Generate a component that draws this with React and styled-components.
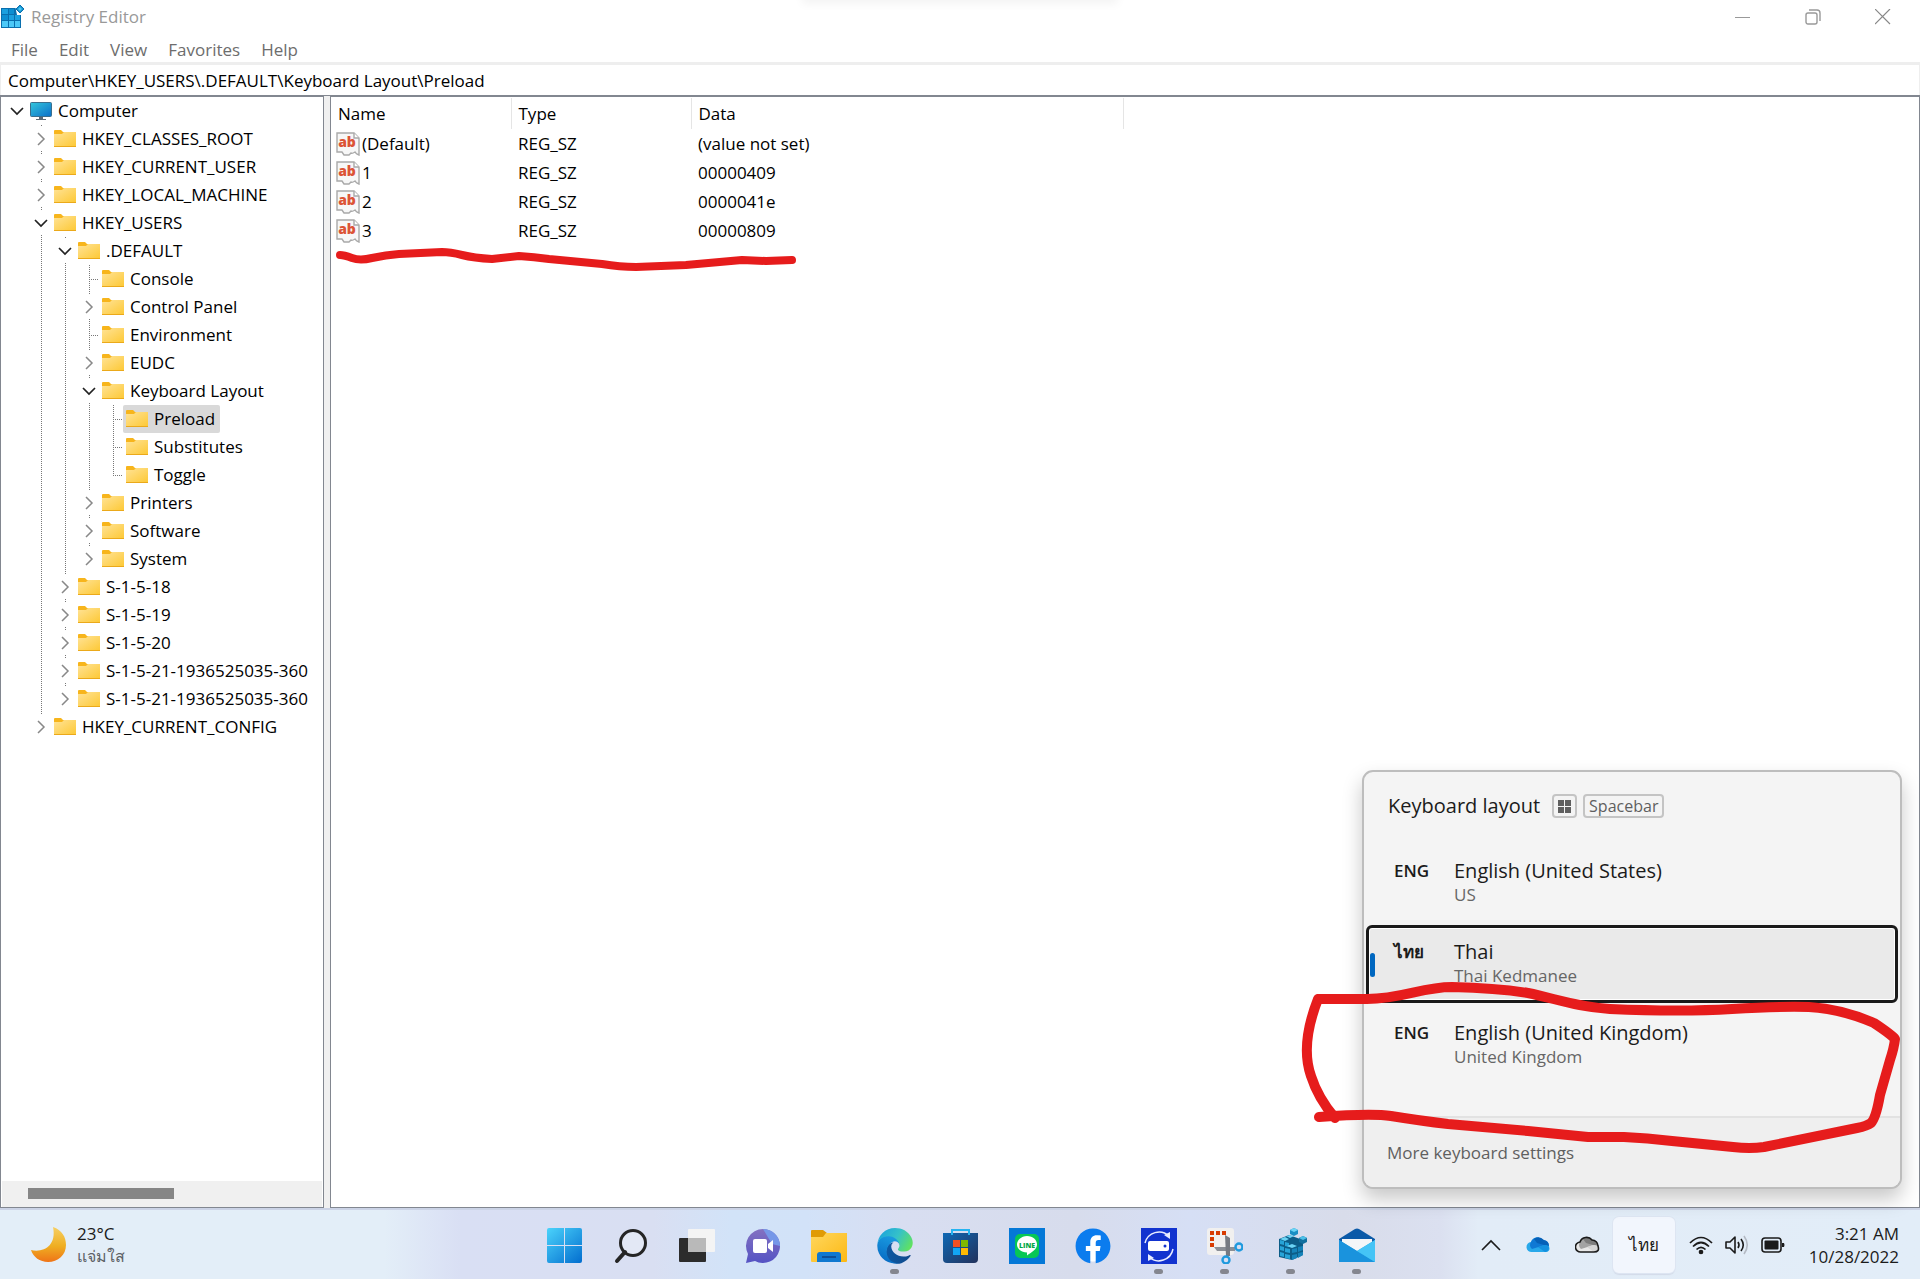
import React from 'react';
import styled, { createGlobalStyle, css } from 'styled-components';
import { FaFacebook } from 'react-icons/fa';

const GlobalStyle = createGlobalStyle`
  * {
    box-sizing: border-box;
  }
  body {
    margin: 0;
    font-family: 'Open Sans', 'Noto Sans', sans-serif;
    font-size: 17px;
    line-height: 24px;
    color: #000;
    background: #fff;
  }
  button,
  input {
    font: inherit;
    color: inherit;
    border: 0;
    padding: 0;
    background: none;
  }
  svg {
    display: block;
    flex: none;
  }
`;

const frame = '#828790';
const ink = '#e61c1c';

const Desktop = styled.div`
  position: relative;
  display: flex;
  flex-direction: column;
  height: 100vh;
  overflow: hidden;
`;

const TitleBar = styled.header`
  position: relative;
  display: flex;
  align-items: center;
  height: 34px;
  padding: 0 2px 0 1px;
  color: #999;
  &::before {
    content: '';
    position: absolute;
    top: -10px;
    left: 42%;
    right: 42%;
    height: 10px;
    box-shadow: 0 0 10px 4px #f4f4f4;
  }
`;
const Title = styled.h1`
  flex: 1;
  margin: 0 0 0 6px;
  font-size: 17px;
  font-weight: 400;
`;
const WindowButton = styled.button`
  display: flex;
  align-items: center;
  justify-content: center;
  width: 70px;
  height: 34px;
`;

const MenuBar = styled.nav`
  display: flex;
  gap: 21px;
  height: 28px;
  padding: 2px 11px 0;
  color: #6d6d6d;
`;
const MenuItem = styled.button`
  height: 28px;
`;

const AddressBar = styled.input`
  width: 100%;
  height: 33px;
  padding: 0 7px;
  border: solid #eee;
  border-width: 3px 1px 0;
  outline: 0;
`;

const Panes = styled.main`
  display: flex;
  flex: 1;
  min-height: 0;
  gap: 6px;
  background: #f0f0f0;
  border-top: 1px solid ${frame};
`;
const TreePane = styled.section`
  display: flex;
  flex-direction: column;
  width: 324px;
  overflow: hidden;
  background: #fff;
  border: 1px solid ${frame};
`;
const Tree = styled.ul`
  flex: 1;
  margin: 0;
  padding: 0 2px;
  list-style: none;
  overflow: hidden;
`;
const TreeRow = styled.li`
  display: flex;
  height: 28px;
  white-space: nowrap;
`;

const dotsDown = 'repeating-linear-gradient(to bottom, #777 0 1px, transparent 1px 2px)';
const dotsAcross = 'repeating-linear-gradient(to right, #777 0 1px, transparent 1px 2px)';
const guides = {
  none: css``,
  line: css`
    background: ${dotsDown} 14px 0 / 1px 28px no-repeat;
  `,
  branch: css`
    background: ${dotsDown} 14px 0 / 1px 28px no-repeat, ${dotsAcross} 14px 14px / 10px 1px no-repeat;
  `,
  end: css`
    background: ${dotsDown} 14px 0 / 1px 15px no-repeat, ${dotsAcross} 14px 14px / 10px 1px no-repeat;
  `,
  toggle: css`
    background: ${dotsDown} 14px 0 / 1px 1px no-repeat, ${dotsDown} 14px 26px / 1px 2px no-repeat;
  `,
  lastToggle: css`
    background: ${dotsDown} 14px 0 / 1px 1px no-repeat;
  `,
};
const Guide = styled.span`
  display: flex;
  flex: none;
  align-items: center;
  justify-content: center;
  width: 24px;
  padding-left: 4px;
  ${({ $kind }) => guides[$kind]}
`;
const TreeItem = styled.button`
  display: flex;
  align-items: center;
  gap: 6px;
  height: 28px;
  padding: 0 5px 0 3px;
  border-radius: 2px;
  background: ${({ $selected }) => ($selected ? '#d9d9d9' : 'none')};
`;

const ScrollTrack = styled.div`
  height: 26px;
  margin: 0 1px;
  padding: 7px 26px;
  background: #f0f0f0;
`;
const ScrollThumb = styled.div`
  width: 146px;
  height: 11px;
  background: #868686;
`;

const ValuePane = styled.section`
  position: relative;
  flex: 1;
  background: #fff;
  border: 1px solid ${frame};
`;
const ValueTable = styled.table`
  margin-top: 1px;
  width: 792px;
  table-layout: fixed;
  border-collapse: collapse;
`;
const HeadCell = styled.th`
  width: ${({ $width }) => $width}px;
  height: 31px;
  padding: 0 7px;
  text-align: left;
  font-weight: 400;
  border-right: 1px solid #e5e5e5;
`;
const Cell = styled.td`
  height: 29px;
  padding: 0 7px;
`;
const NameCell = styled(Cell)`
  padding: 0 5px;
`;
const ValueName = styled.div`
  display: flex;
  align-items: center;
  gap: 2px;
`;

const Ink = styled.svg`
  position: absolute;
  left: -2px;
  top: -2px;
  overflow: visible;
  pointer-events: none;
  fill: none;
  stroke: ${ink};
  stroke-linecap: round;
  stroke-linejoin: round;
`;

const Flyout = styled.aside`
  position: absolute;
  right: 18px;
  bottom: 90px;
  width: 540px;
  color: #1b1b1b;
  background: #f4f4f4;
  border: 2px solid #bdbdbd;
  border-radius: 11px;
  box-shadow: 0 10px 20px rgba(0, 0, 0, 0.22);
`;
const FlyoutHead = styled.div`
  display: flex;
  align-items: center;
  gap: 6px;
  height: 68px;
  padding: 0 24px;
`;
const FlyoutTitle = styled.h2`
  margin: 0 6px 0 0;
  font-size: 20px;
  font-weight: 400;
`;
const KeyCap = styled.kbd`
  display: flex;
  align-items: center;
  height: 24px;
  padding: 0 4px;
  font: 16px 'Open Sans', sans-serif;
  color: #5f5f5f;
  border: 2px solid #c4c4c4;
  border-radius: 4px;
`;
const Layouts = styled.div`
  display: flex;
  flex-direction: column;
  gap: 3px;
  padding: 4px 2px 0;
`;
const LayoutOption = styled.button`
  position: relative;
  display: grid;
  grid-template-columns: 60px 1fr;
  align-content: start;
  height: 78px;
  padding: 12px 25px 0;
  text-align: left;
  border: 3px solid transparent;
  border-radius: 6px;
  ${({ $active }) =>
    $active &&
    css`
      background: #eaeaea;
      border-color: #1a1a1a;
      box-shadow: inset 0 0 0 1px #fff;
      &::before {
        content: '';
        position: absolute;
        left: 1px;
        top: 25px;
        width: 5px;
        height: 24px;
        border-radius: 3px;
        background: #0067c0;
      }
    `}
`;
const LayoutCode = styled.span`
  font-size: 17px;
  font-weight: 600;
`;
const LayoutName = styled.span`
  font-size: 20px;
`;
const LayoutDetail = styled.span`
  grid-column: 2;
  font-size: 17px;
  color: #666;
`;
const FlyoutFoot = styled.div`
  display: flex;
  align-items: center;
  height: 71px;
  margin-top: 32px;
  padding: 0 23px;
  color: #5f5f5f;
  background: #efefef;
  border-top: 2px solid #e2e2e2;
  border-radius: 0 0 9px 9px;
`;

const Taskbar = styled.footer`
  display: grid;
  grid-template-columns: 1fr auto 1fr;
  flex: none;
  height: 71px;
  color: #1b1b1b;
  border-top: 2px solid #cbd3e6;
  background: linear-gradient(
    to right,
    #e3eef8 0,
    #e3eef8 20%,
    #d9dff4 24%,
    #d9dff2 34%,
    #d2e3f8 38%,
    #d2e2f8 42%,
    #d8def1 47%,
    #d7dcec 56%,
    #d6dff5 62%,
    #d8dcea 70%,
    #dbe0f0 75%,
    #e2ecf7 77%,
    #e2edf8 100%
  );
`;
const Weather = styled.button`
  display: flex;
  align-items: center;
  gap: 10px;
  padding: 0 30px;
  text-align: left;
`;
const Lines = styled.span`
  display: flex;
  flex-direction: column;
  line-height: 23px;
`;
const Muted = styled.span`
  font-size: 16px;
  color: #5d6166;
`;
const Apps = styled.div`
  display: flex;
  padding: 2px 0 0 2px;
`;
const AppButton = styled.button`
  position: relative;
  display: flex;
  align-items: center;
  justify-content: center;
  width: 66px;
  ${({ $running }) =>
    $running &&
    css`
      &::after {
        content: '';
        position: absolute;
        left: 28px;
        bottom: 5px;
        width: 9px;
        height: 5px;
        border-radius: 3px;
        background: #84868f;
      }
    `}
`;
const Tray = styled.div`
  display: flex;
  align-items: center;
  justify-content: flex-end;
  padding-right: 21px;
`;
const TrayButton = styled.button`
  display: flex;
  align-items: center;
  justify-content: center;
  gap: 12px;
  width: ${({ $width }) => $width}px;
  height: 56px;
`;
const LanguageButton = styled(TrayButton)`
  background: #f2f6fd;
  border-radius: 6px;
  box-shadow: 0 0 0 1px #dde5f2, 0 2px 1px #d3dae8;
`;
const Clock = styled.time`
  display: flex;
  flex-direction: column;
  margin-left: 10px;
  line-height: 23px;
  text-align: right;
`;
const FacebookLogo = styled(FaFacebook)`
  color: #0b7cee;
  background: radial-gradient(#fff 60%, transparent 62%);
`;

const RegistryIcon = () => (
  <svg width="24" height="24" viewBox="0 0 24 24">
    <rect x="0" y="3" width="20" height="20" fill="#0a6fae" />
    <path d="M1 4h6v5H1zM8 10h5v5H8zM14 10h5v5h-5z" fill="#1ba0df" />
    <path d="M1 10h6v5H1zM8 4h5v5H8z" fill="#0d8ed1" />
    <path d="M1 16h6v6H1zM8 16h5v6H8zM14 16h5v6h-5z" fill="#4cc9f8" />
    <path d="M14 0h8v10h-6z" fill="#fff" />
    <path d="M19 0l4 4-4 4-4-4z" fill="#1594cf" stroke="#0a6fae" />
    <path d="M19 2l2 2-2 2-2-2z" fill="#4cc9f8" />
  </svg>
);

const ComputerIcon = () => (
  <svg width="22" height="20" viewBox="0 0 22 20">
    <defs>
      <linearGradient id="screen" x1="0" y1="0" x2="1" y2="1">
        <stop offset="0" stopColor="#33c6dc" />
        <stop offset="1" stopColor="#0b6fc9" />
      </linearGradient>
    </defs>
    <rect x="0.5" y="1.5" width="21" height="14" rx="1" fill="url(#screen)" stroke="#3b6e8c" />
    <path d="M9 16h4v2h3v1H6v-1h3z" fill="#5b6b78" />
  </svg>
);

const FolderIcon = () => (
  <svg width="22" height="18" viewBox="0 0 22 18">
    <defs>
      <linearGradient id="folder" x1="0" y1="0" x2="1" y2="1">
        <stop offset="0" stopColor="#ffe397" />
        <stop offset="1" stopColor="#fdc937" />
      </linearGradient>
    </defs>
    <path d="M0 1q0-1 1-1h6l2 2h12q1 0 1 1v3H0z" fill="#f7b51c" />
    <path d="M0 4h8l2-2h12v14H0z" fill="url(#folder)" />
    <path d="M0 16h22v1H0z" fill="#eba91a" />
  </svg>
);

const StringIcon = () => (
  <svg width="24" height="24" viewBox="0 0 24 24">
    <path
      d="M1 1h17l5 5v17q-3-1-4-3-3 2-4 1l-2 2H8l-2-3H1z"
      fill="#f7f7f7"
      stroke="#a9a9a9"
      strokeWidth="1.4"
    />
    <path d="M18 1v5h5" fill="#fff" stroke="#a9a9a9" strokeWidth="1.4" />
    <text x="11" y="15" textAnchor="middle" fontFamily="Open Sans" fontSize="14" fontWeight="800" fill="#dc5436">
      ab
    </text>
  </svg>
);

const Chevron = ({ open }) =>
  open ? (
    <svg width="14" height="14" viewBox="0 0 14 14" fill="none" stroke="#222" strokeWidth="1.7">
      <path d="M1 4l6 6 6-6" />
    </svg>
  ) : (
    <svg width="14" height="14" viewBox="0 0 14 14" fill="none" stroke="#888" strokeWidth="1.5">
      <path d="M4 1l6 6-6 6" />
    </svg>
  );

const MoonIcon = () => (
  <svg width="37" height="37" viewBox="0 0 37 37">
    <defs>
      <linearGradient id="moon" x1="0" y1="0" x2="0" y2="1">
        <stop offset="0" stopColor="#f6cf63" />
        <stop offset="0.55" stopColor="#efae22" />
        <stop offset="1" stopColor="#ef7417" />
      </linearGradient>
    </defs>
    <path d="M23 1C32 4 36 11 36 19 36 29 28 36 18 36 10 36 3 31 1 24c12 3 26-4 22-23z" fill="url(#moon)" />
  </svg>
);

const StartIcon = () => (
  <svg width="36" height="36" viewBox="0 0 36 36">
    <defs>
      <linearGradient id="start" gradientUnits="userSpaceOnUse" x1="0" y1="0" x2="32" y2="36">
        <stop offset="0" stopColor="#4bd3fb" />
        <stop offset="1" stopColor="#0470d0" />
      </linearGradient>
    </defs>
    <path d="M2 0h15v17H0V2q0-2 2-2zM18 0h15q2 0 2 2v15H18zM0 18h17v17H2q-2 0-2-2zM18 18h17v15q0 2-2 2H18z" fill="url(#start)" />
  </svg>
);

const SearchIcon = () => (
  <svg width="34" height="36" viewBox="0 0 34 36" fill="none" stroke="#252525">
    <circle cx="19" cy="15" r="12.5" strokeWidth="3" fill="#e3e8f5" />
    <path d="M11 24l-8 9" strokeWidth="4" strokeLinecap="round" />
  </svg>
);

const TaskViewIcon = () => (
  <svg width="36" height="36" viewBox="0 0 36 36">
    <rect x="0" y="10" width="27" height="24" rx="1" fill="#2c2c2c" />
    <rect x="9" y="1" width="27" height="23" rx="1" fill="#f4f4f4" />
    <rect x="9" y="10" width="18" height="14" fill="#b9b9b9" />
  </svg>
);

const ChatIcon = () => (
  <svg width="36" height="36" viewBox="0 0 36 36">
    <defs>
      <linearGradient id="chat" x1="0" y1="0" x2="0" y2="1">
        <stop offset="0" stopColor="#8371c1" />
        <stop offset="1" stopColor="#5553c4" />
      </linearGradient>
    </defs>
    <path d="M18 1a17 17 0 1 1-8 32L1 35l2-9A17 17 0 0 1 18 1z" fill="url(#chat)" />
    <path d="M18 1a17 17 0 0 1 17 17l-8-2z" fill="#7597e8" />
    <rect x="8" y="11" width="14" height="14" rx="2" fill="#fff" />
    <path d="M23 16l5-4v12l-5-4z" fill="#fff" />
  </svg>
);

const ExplorerIcon = () => (
  <svg width="36" height="36" viewBox="0 0 36 36">
    <defs>
      <linearGradient id="explorer" x1="0" y1="0" x2="1" y2="1">
        <stop offset="0" stopColor="#ffd75e" />
        <stop offset="1" stopColor="#fcb813" />
      </linearGradient>
    </defs>
    <path d="M0 3q0-1 1-1h11l4 3h19q1 0 1 1v6H0z" fill="#e09b05" />
    <path d="M0 9h12l3-4h21v28q0 1-1 1H1q-1 0-1-1z" fill="url(#explorer)" />
    <path d="M6 34v-7q0-3 3-3h18q3 0 3 3v7z" fill="#0f78d0" />
    <path d="M11 29h14" stroke="#0c4f98" strokeWidth="2" />
  </svg>
);

const EdgeIcon = () => (
  <svg width="36" height="36" viewBox="0 0 256 260">
    <defs>
      <linearGradient id="edgeDark" x1="0" y1="0" x2="1" y2="0">
        <stop offset="0" stopColor="#0c59a4" />
        <stop offset="1" stopColor="#114a8b" />
      </linearGradient>
      <linearGradient id="edgeBlue" x1="0.6" y1="0" x2="0.3" y2="1">
        <stop offset="0" stopColor="#1b9de2" />
        <stop offset="1" stopColor="#0669c2" />
      </linearGradient>
      <linearGradient id="edgeGreen" x1="0" y1="0.3" x2="1" y2="0.7">
        <stop offset="0" stopColor="#1ca4dc" />
        <stop offset="0.5" stopColor="#35c1c9" />
        <stop offset="1" stopColor="#62e35d" />
      </linearGradient>
    </defs>
    <path
      fill="url(#edgeDark)"
      d="M235.68 195.46a93.73 93.73 0 0 1-10.54 4.71 101.87 101.87 0 0 1-35.9 6.46c-47.32 0-88.54-32.55-88.54-74.32A31.48 31.48 0 0 1 117.13 105c-42.8 1.8-53.8 46.4-53.8 72.53 0 73.88 68.09 81.37 82.76 81.37 7.91 0 19.84-2.3 27-4.56l1.31-.44A128.34 128.34 0 0 0 241 201.1a4 4 0 0 0-5.32-5.64z"
    />
    <path
      fill="url(#edgeBlue)"
      d="M105.73 241.42A79.2 79.2 0 0 1 83 220.08a80.72 80.72 0 0 1 29.49-120.2c3.12-1.47 8.45-4.13 15.54-4a32.35 32.35 0 0 1 25.69 13 31.88 31.88 0 0 1 6.36 18.66c0-.21 24.46-79.6-80-79.6-43.9 0-80 41.66-80 78.21a130.15 130.15 0 0 0 12.11 56 128 128 0 0 0 156.38 67.11 75.55 75.55 0 0 1-62.78-8z"
    />
    <path
      fill="url(#edgeGreen)"
      d="M152.33 148.86c-.81 1.05-3.3 2.5-3.3 5.66 0 2.61 1.7 5.12 4.72 7.23 14.38 10 41.49 8.68 41.56 8.68a59.56 59.56 0 0 0 30.27-8.35A61.38 61.38 0 0 0 256 109.2c.26-22.41-8-37.31-11.34-43.91C223.46 23.84 177.72 0 128 0A128 128 0 0 0 0 126.2c.48-36.54 36.8-66.05 80-66.05 3.5 0 23.46.34 42 10.07 16.34 8.58 24.9 18.94 30.85 29.21 6.18 10.67 7.28 24.15 7.28 29.52s-2.74 13.33-7.8 19.91z"
    />
  </svg>
);

const StoreIcon = () => (
  <svg width="36" height="36" viewBox="0 0 36 36">
    <defs>
      <linearGradient id="store" x1="0" y1="0" x2="1" y2="1">
        <stop offset="0" stopColor="#0e68b4" />
        <stop offset="1" stopColor="#23325c" />
      </linearGradient>
    </defs>
    <path d="M0 5h35v26q0 4-4 4H4q-4 0-4-4z" fill="url(#store)" />
    <path d="M9 7V2h17v5" fill="none" stroke="#25b4f1" strokeWidth="2" />
    <path d="M10 12h7v7h-7z" fill="#f25022" />
    <path d="M18 12h7v7h-7z" fill="#7fba00" />
    <path d="M10 20h7v7h-7z" fill="#12a5f4" />
    <path d="M18 20h7v7h-7z" fill="#ffb904" />
  </svg>
);

const LineIcon = () => (
  <svg width="36" height="36" viewBox="0 0 36 36">
    <rect width="36" height="36" fill="#0478d7" />
    <rect x="6" y="6" width="24" height="24" rx="5" fill="#07c755" />
    <path d="M18 8c6 0 10 4 10 8.500 0 5-6 8-10 11v-3c-6 0-10-4-10-8S12 8 18 8z" fill="#fff" />
    <text x="18" y="20" textAnchor="middle" fontFamily="Open Sans" fontSize="7" fontWeight="800" fill="#06a848">
      LINE
    </text>
  </svg>
);

const RotateAppIcon = () => (
  <svg width="36" height="36" viewBox="0 0 36 36">
    <rect width="36" height="36" fill="#1233cf" />
    <g fill="none" stroke="#e8ecff" strokeWidth="1.500">
      <path d="M4 15A14.500 14.500 0 0 1 28 8M32 21A14.500 14.500 0 0 1 8 29" />
    </g>
    <path d="M29 4v7l-6-4zM7 33v-7l6 4z" fill="#e8ecff" />
    <rect x="7" y="13" width="21" height="10" rx="2" fill="#fff" />
    <circle cx="24" cy="18" r="1.500" fill="#1233cf" />
  </svg>
);

const SnipIcon = () => (
  <svg width="36" height="36" viewBox="0 0 36 36">
    <rect width="27" height="27" rx="3" fill="#f1f0ef" />
    <path d="M3 3h4v4H3zM9 3h4v4H9zM15 3h4v4h-4zM3 9h4v4H3zM3 15h4v4H3z" fill="#d83b01" />
    <path d="M7 19l3 4h18v-4z" fill="#8b8f96" />
    <path d="M18 7l5 3v18h-4z" fill="#767a82" />
    <circle cx="32" cy="19" r="3.500" fill="none" stroke="#1f9ade" strokeWidth="2.400" />
    <circle cx="19" cy="32" r="3.500" fill="none" stroke="#1f9ade" strokeWidth="2.400" />
  </svg>
);

const RegistryCubeIcon = () => (
  <svg width="36" height="36" viewBox="-3 0 36 36">
    <path d="M3 11l10-4 14 5v15l-11 5-13-3z" fill="#0c5d88" />
    <path d="M4 12l4 1v4l-4-1zM4 18l4 1v4l-4-1zM4 24l4 1v4l-4-1zM9 20l5 1v4l-5-1zM9 26l5 1v4l-5-1z" fill="#27a4d8" />
    <path d="M16 21l5-1v4l-5 1zM22 19l5-1v4l-5 2zM16 27l5-1v4l-5 2zM22 25l5-1v3l-5 3z" fill="#1583b9" />
    <path d="M9 14l4 1v4l-4-1z" fill="#27a4d8" />
    <path d="M4 11l5-2 4 2-4 2zM10 8l4-1 4 1-4 2zM11 18l5-2 5 2-5 2z" fill="#6bd4f5" />
    <path d="M18 0l4 2v4l-4 2-4-2V2z" fill="#1a8fc4" />
    <path d="M18 0l4 2-4 2-4-2z" fill="#6bd4f5" />
    <path d="M27 8l4 2v4l-4 2-4-2v-4z" fill="#12709f" />
    <path d="M27 8l4 2-4 2-4-2z" fill="#4cc0e9" />
  </svg>
);

const MailIcon = () => (
  <svg width="36" height="36" viewBox="0 0 36 36">
    <path d="M0 11L16 1q2-1 4 0l16 10v3H0z" fill="#0b5aa8" />
    <path d="M3 11h30v6L18 26 3 17z" fill="#f4f6f8" />
    <path d="M0 12l18 11L36 12v22H0z" fill="#27aeea" />
    <path d="M0 12l18 11 18 11H0z" fill="#1a93dd" />
    <path d="M36 12L18 23l18 11z" fill="#45c4f6" />
  </svg>
);

const cloud = 'M6 17a5 5 0 0 1-1-10 7 7 0 0 1 12-2 6 6 0 0 1 6 6q2 6-4 6z';
const CloudIcon = ({ gray }) => (
  <svg width="26" height="20" viewBox="0 0 26 20">
    <path d={cloud} fill={gray ? '#e8e8e8' : '#28a8ea'} />
    <path d="M6 14a5 5 0 0 1-1-7 7 7 0 0 1 12-2l2 5z" fill={gray ? '#a3a3a3' : '#0f78d4'} />
    <path d="M8 4q5-4 10 1 5 1 5 6l-5-1-7-2z" fill={gray ? '#7d7d7d' : '#0560b8'} />
    <path d="M12 12l6-2q5 0 5 3-1 4-4 4z" fill={gray ? '#d5d5d5' : '#1490df'} />
    {gray && <path d={cloud} fill="none" stroke="#1b1b1b" strokeWidth="1.600" />}
  </svg>
);

const WifiIcon = () => (
  <svg width="24" height="20" viewBox="0 0 24 20" fill="none" stroke="#1b1b1b" strokeWidth="1.700">
    <path d="M1 8q11-11 22 0M4 11.500q8-8 16 0M7.500 14.500q4.500-4.500 9 0" />
    <circle cx="12" cy="17" r="1.500" fill="#1b1b1b" />
  </svg>
);

const VolumeIcon = () => (
  <svg width="24" height="20" viewBox="0 0 24 20" fill="none" stroke="#1b1b1b" strokeWidth="1.600">
    <path d="M1 7h4l5-5v16l-5-5H1z" strokeLinejoin="round" />
    <path d="M13 7q2 3 0 6M16 4q4.500 6 0 12" />
    <path d="M19 1q6.500 9 0 18" stroke="#b4bac4" />
  </svg>
);

const BatteryIcon = () => (
  <svg width="24" height="20" viewBox="0 0 24 20">
    <rect x="1" y="3" width="19" height="14" rx="3" fill="none" stroke="#1b1b1b" strokeWidth="1.600" />
    <rect x="3.500" y="5.500" width="14" height="9" rx="1" fill="#1b1b1b" />
    <path d="M21 8h2q1 2 0 4h-2z" fill="#1b1b1b" />
  </svg>
);

// guides: one entry per indent level, the last one belongs to the row itself
const rows = [
  { label: 'Computer', guides: ['none'], open: true, icon: <ComputerIcon /> },
  { label: 'HKEY_CLASSES_ROOT', guides: ['none', 'toggle'], open: false },
  { label: 'HKEY_CURRENT_USER', guides: ['none', 'toggle'], open: false },
  { label: 'HKEY_LOCAL_MACHINE', guides: ['none', 'toggle'], open: false },
  { label: 'HKEY_USERS', guides: ['none', 'toggle'], open: true },
  { label: '.DEFAULT', guides: ['none', 'line', 'toggle'], open: true },
  { label: 'Console', guides: ['none', 'line', 'line', 'branch'] },
  { label: 'Control Panel', guides: ['none', 'line', 'line', 'toggle'], open: false },
  { label: 'Environment', guides: ['none', 'line', 'line', 'branch'] },
  { label: 'EUDC', guides: ['none', 'line', 'line', 'toggle'], open: false },
  { label: 'Keyboard Layout', guides: ['none', 'line', 'line', 'toggle'], open: true },
  { label: 'Preload', guides: ['none', 'line', 'line', 'line', 'branch'], selected: true },
  { label: 'Substitutes', guides: ['none', 'line', 'line', 'line', 'branch'] },
  { label: 'Toggle', guides: ['none', 'line', 'line', 'line', 'end'] },
  { label: 'Printers', guides: ['none', 'line', 'line', 'toggle'], open: false },
  { label: 'Software', guides: ['none', 'line', 'line', 'toggle'], open: false },
  { label: 'System', guides: ['none', 'line', 'line', 'lastToggle'], open: false },
  { label: 'S-1-5-18', guides: ['none', 'line', 'toggle'], open: false },
  { label: 'S-1-5-19', guides: ['none', 'line', 'toggle'], open: false },
  { label: 'S-1-5-20', guides: ['none', 'line', 'toggle'], open: false },
  { label: 'S-1-5-21-1936525035-360', guides: ['none', 'line', 'toggle'], open: false },
  { label: 'S-1-5-21-1936525035-360', guides: ['none', 'line', 'lastToggle'], open: false },
  { label: 'HKEY_CURRENT_CONFIG', guides: ['none', 'lastToggle'], open: false },
];

const values = [
  ['(Default)', 'REG_SZ', '(value not set)'],
  ['1', 'REG_SZ', '00000409'],
  ['2', 'REG_SZ', '0000041e'],
  ['3', 'REG_SZ', '00000809'],
];

const layouts = [
  { code: 'ENG', name: 'English (United States)', detail: 'US' },
  { code: 'ไทย', name: 'Thai', detail: 'Thai Kedmanee', active: true },
  { code: 'ENG', name: 'English (United Kingdom)', detail: 'United Kingdom' },
];

const apps = [
  { name: 'Start', icon: <StartIcon /> },
  { name: 'Search', icon: <SearchIcon /> },
  { name: 'Task View', icon: <TaskViewIcon /> },
  { name: 'Chat', icon: <ChatIcon /> },
  { name: 'File Explorer', icon: <ExplorerIcon /> },
  { name: 'Edge', icon: <EdgeIcon />, running: true },
  { name: 'Store', icon: <StoreIcon /> },
  { name: 'LINE', icon: <LineIcon /> },
  { name: 'Facebook', icon: <FacebookLogo size={36} /> },
  { name: 'Drive', icon: <RotateAppIcon />, running: true },
  { name: 'Snipping Tool', icon: <SnipIcon />, running: true },
  { name: 'Registry Editor', icon: <RegistryCubeIcon />, running: true },
  { name: 'Mail', icon: <MailIcon />, running: true },
];

const RegistryTree = () => (
  <TreePane>
    <Tree>
      {rows.map((row, i) => (
        <TreeRow key={i}>
          {row.guides.map((kind, level) => (
            <Guide key={level} $kind={kind}>
              {level === row.guides.length - 1 && row.open !== undefined && <Chevron open={row.open} />}
            </Guide>
          ))}
          <TreeItem $selected={row.selected}>
            {row.icon || <FolderIcon />}
            {row.label}
          </TreeItem>
        </TreeRow>
      ))}
    </Tree>
    <ScrollTrack>
      <ScrollThumb />
    </ScrollTrack>
  </TreePane>
);

const RegistryValues = () => (
  <ValuePane>
    <ValueTable>
      <thead>
        <tr>
          <HeadCell $width={180}>Name</HeadCell>
          <HeadCell $width={180}>Type</HeadCell>
          <HeadCell $width={432}>Data</HeadCell>
        </tr>
      </thead>
      <tbody>
        {values.map(([name, type, data]) => (
          <tr key={name}>
            <NameCell>
              <ValueName>
                <StringIcon />
                {name}
              </ValueName>
            </NameCell>
            <Cell>{type}</Cell>
            <Cell>{data}</Cell>
          </tr>
        ))}
      </tbody>
    </ValueTable>
    <Ink width="470" height="180" strokeWidth="8">
      <path d="M11 160Q15 160 23 163T43 163Q57 160 70 159L113 157Q121 157 133 160T163 164L190 161Q205 162 220 164L273 169Q291 172 307 172L357 170 413 165 437 166 463 165" />
    </Ink>
  </ValuePane>
);

const KeyboardFlyout = () => (
  <Flyout>
    <FlyoutHead>
      <FlyoutTitle>Keyboard layout</FlyoutTitle>
      <KeyCap>
        <svg width="13" height="13" viewBox="0 0 13 13" fill="#5f5f5f">
          <path d="M0 0h6v6H0zM7 0h6v6H7zM0 7h6v6H0zM7 7h6v6H7z" />
        </svg>
      </KeyCap>
      <KeyCap>Spacebar</KeyCap>
    </FlyoutHead>
    <Layouts>
      {layouts.map(({ code, name, detail, active }) => (
        <LayoutOption key={name} $active={active}>
          <LayoutCode>{code}</LayoutCode>
          <LayoutName>{name}</LayoutName>
          <LayoutDetail>{detail}</LayoutDetail>
        </LayoutOption>
      ))}
    </Layouts>
    <FlyoutFoot>
      <button>More keyboard settings</button>
    </FlyoutFoot>
    <Ink width="540" height="420" strokeWidth="10">
      <path d="M-44 229L5 229C40 229 60 217 90 217Q135 218 166 223C195 229 215 237 248 239Q320 242 370 239 420 236 447 237 480 239 512 253 530 265 533 269 532 278 528 290L518 325Q514 348 509 353 505 356 495 358L402 377Q388 379 371 377L310 371Q285 368 262 367L226 367 166 361 86 354Q60 351 29 346 10 343-43 347M-44 229Q-62 275-51 306-44 328-27 348" />
    </Ink>
  </Flyout>
);

const App = () => (
  <>
    <GlobalStyle />
    <Desktop>
      <TitleBar>
        <RegistryIcon />
        <Title>Registry Editor</Title>
        <WindowButton aria-label="Minimize">
          <svg width="16" height="16" stroke="#999">
            <path d="M0 8.500h15" />
          </svg>
        </WindowButton>
        <WindowButton aria-label="Restore">
          <svg width="16" height="16" fill="none" stroke="#999" strokeWidth="1.400">
            <rect x="1" y="4" width="11" height="11" rx="2" />
            <path d="M4 1h8q3 0 3 3v8" />
          </svg>
        </WindowButton>
        <WindowButton aria-label="Close">
          <svg width="16" height="16" stroke="#888" strokeWidth="1.200">
            <path d="M0 0l15 15M15 0L0 15" />
          </svg>
        </WindowButton>
      </TitleBar>
      <MenuBar>
        {['File', 'Edit', 'View', 'Favorites', 'Help'].map((item) => (
          <MenuItem key={item}>{item}</MenuItem>
        ))}
      </MenuBar>
      <AddressBar aria-label="Address" defaultValue="Computer\HKEY_USERS\.DEFAULT\Keyboard Layout\Preload" />
      <Panes>
        <RegistryTree />
        <RegistryValues />
      </Panes>
      <Taskbar>
        <Weather>
          <MoonIcon />
          <Lines>
            23°C
            <Muted>แจ่มใส</Muted>
          </Lines>
        </Weather>
        <Apps>
          {apps.map(({ name, icon, running }) => (
            <AppButton key={name} aria-label={name} $running={running}>
              {icon}
            </AppButton>
          ))}
        </Apps>
        <Tray>
          <TrayButton $width={48} aria-label="Hidden icons">
            <svg width="20" height="12" fill="none" stroke="#1b1b1b" strokeWidth="1.600">
              <path d="M1 11l9-9 9 9" />
            </svg>
          </TrayButton>
          <TrayButton $width={48} aria-label="OneDrive">
            <CloudIcon />
          </TrayButton>
          <TrayButton $width={50} aria-label="OneDrive personal">
            <CloudIcon gray />
          </TrayButton>
          <LanguageButton $width={62}>ไทย</LanguageButton>
          <TrayButton $width={124} aria-label="Network, volume and battery">
            <WifiIcon />
            <VolumeIcon />
            <BatteryIcon />
          </TrayButton>
          <Clock>
            <span>3:21 AM</span>
            <span>10/28/2022</span>
          </Clock>
        </Tray>
      </Taskbar>
      <KeyboardFlyout />
    </Desktop>
  </>
);

export default App;
